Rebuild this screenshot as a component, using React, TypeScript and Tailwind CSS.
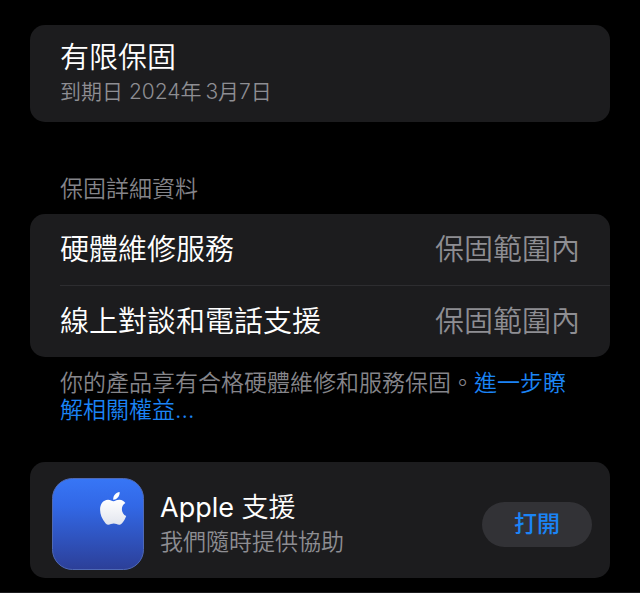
import type { ReactNode } from 'react';

const details = [
  { name: '硬體維修服務', status: '保固範圍內' },
  { name: '線上對談和電話支援', status: '保固範圍內' },
];

function Card({ children, className = '' }: { children: ReactNode; className?: string }) {
  return <section className={`rounded-[15px] bg-[#1c1c1e] ${className}`}>{children}</section>;
}

function SupportIcon() {
  return (
    <svg className="size-[92px] shrink-0" viewBox="0 0 92 92" aria-hidden="true">
      <defs>
        <linearGradient id="tile" x1="0" y1="0" x2="0" y2="1">
          <stop offset="0" stopColor="#3776f6" />
          <stop offset="0.3" stopColor="#3268e6" />
          <stop offset="1" stopColor="#2c3f98" />
        </linearGradient>
        <linearGradient id="mark" x1="0" y1="0" x2="0" y2="1">
          <stop offset="0" stopColor="#ffffff" />
          <stop offset="1" stopColor="#e2e5ee" />
        </linearGradient>
      </defs>
      <rect x="0.5" y="0.5" width="91" height="91" rx="20" fill="url(#tile)" stroke="#4f69b4" />
      <g transform="translate(40.5 8.5) scale(1.72 1.82)" fill="url(#mark)">
        <path d="M17.05 20.28c-.98.95-2.05.8-3.08.35-1.09-.46-2.09-.48-3.24 0-1.44.62-2.2.44-3.06-.35C2.79 15.25 3.51 7.59 9.05 7.31c1.35.07 2.29.74 3.08.8 1.18-.24 2.31-.93 3.57-.84 1.51.12 2.65.72 3.4 1.8-3.12 1.87-2.38 5.98.48 7.13-.57 1.5-1.31 2.99-2.54 4.09z" />
        <path fill="#ffffff" d="M12.03 7.25c-.15-2.23 1.66-4.07 3.74-4.25.29 2.58-2.34 4.5-3.74 4.25z" />
      </g>
    </svg>
  );
}

export default function App() {
  return (
    <main
      lang="zh-Hant"
      className="min-h-screen border-b border-[#1c1c1e] bg-black px-[30px] pt-[25px] pb-[14px] font-['Inter','Noto_Sans_CJK_TC',sans-serif] font-[350] text-[#8e8e93]"
    >
      <Card className="px-[30px] pt-[14px] pb-[16px]">
        <h1 className="text-[29px] leading-[38px] text-white">有限保固</h1>
        <p className="text-[21px] leading-[29px]">到期日 2024年{'\u2009'}3月7日</p>
      </Card>

      <h2 className="mt-[52px] mb-[10px] px-[30px] text-[23px] leading-[30px] text-[#85858a]">保固詳細資料</h2>
      <Card className="pl-[30px]">
        <dl className="divide-y divide-[#2d2d30] text-[29px] leading-[71px]">
          {details.map((row) => (
            <div key={row.name} className="flex justify-between pr-[30px]">
              <dt className="text-white">{row.name}</dt>
              <dd>{row.status}</dd>
            </div>
          ))}
        </dl>
      </Card>
      <p className="mt-[13px] px-[30px] text-[23px] leading-[27px] text-[#85858a]">
        你的產品享有合格硬體維修和服務保固。
        <a href="#coverage" className="text-[#1b84f5]">
          進一步瞭解相關權益...
        </a>
      </p>

      <Card className="mt-[38px] flex items-center pt-[16px] pr-[18px] pb-[8px] pl-[22px]">
        <SupportIcon />
        <div className="ml-[16px] flex-1">
          <h2 className="text-[27px] leading-[36px] text-white">
            <span className="font-normal">Apple</span> 支援
          </h2>
          <p className="text-[23px] leading-[32px]">我們隨時提供協助</p>
        </div>
        <button type="button" className="h-[45px] w-[110px] rounded-full bg-[#323236] text-[23px] font-medium text-[#1b84f5]">
          打開
        </button>
      </Card>
    </main>
  );
}
